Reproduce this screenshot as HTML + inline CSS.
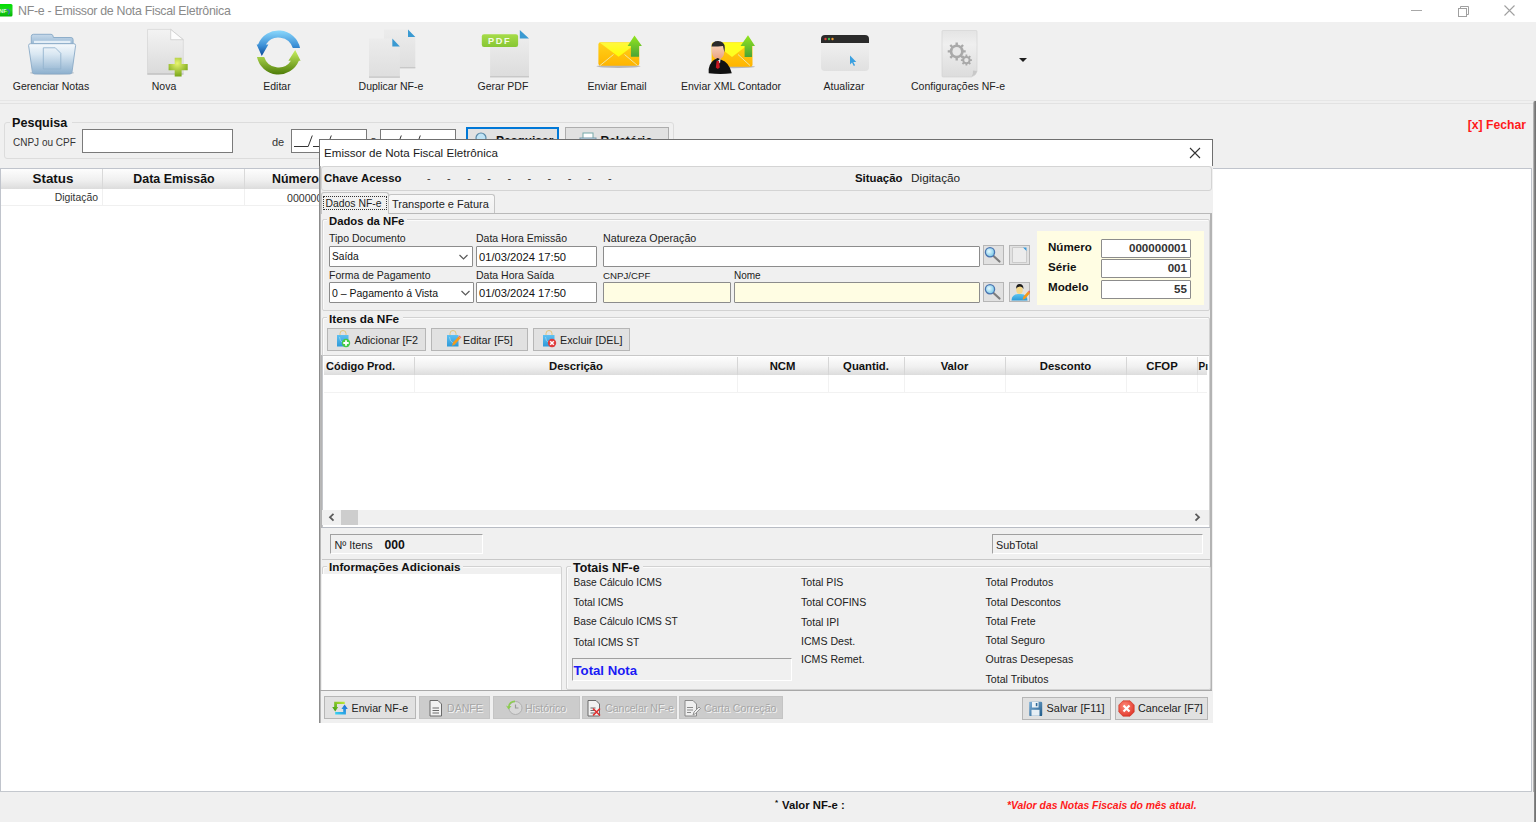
<!DOCTYPE html><html><head><meta charset="utf-8"><style>
html,body{margin:0;padding:0;width:1536px;height:822px;overflow:hidden;background:#f0f0f0}
body{position:relative;font-family:"Liberation Sans",sans-serif}
div{position:absolute;box-sizing:border-box}
.t{white-space:nowrap}
</style></head><body>
<div style="left:0px;top:0px;width:1536px;height:22px;background:#fff"></div>
<svg style="position:absolute;left:0px;top:4px" width="13" height="13" viewBox="0 0 13 13"><defs><linearGradient id="ag" x1="0" y1="0" x2="0" y2="1"><stop offset="0" stop-color="#00e000"/><stop offset="0.5" stop-color="#22d422"/><stop offset="1" stop-color="#00b400"/></linearGradient></defs><rect x="-2" y="0" width="14.5" height="12.5" rx="1.5" fill="url(#ag)"/><text x="-1" y="8.5" font-size="6" font-weight="bold" fill="#d8f8d8" font-family="Liberation Sans">NF</text><path d="M6.5 5.5 q3 0 3 3 l-1.5 2" fill="none" stroke="#3a7ab0" stroke-width="1.3"/></svg>
<div class="t" style="left:18px;top:4.50px;font-size:12.4px;line-height:12.4px;color:#8a8a8a;letter-spacing:-0.3px">NF-e - Emissor de Nota Fiscal Eletrônica</div>
<div style="left:1411px;top:10px;width:11px;height:1px;background:#a8a8a8"></div>
<svg style="position:absolute;left:1456px;top:4px" width="14" height="14" viewBox="0 0 14 14"><rect x="2.5" y="4.5" width="8" height="8" fill="none" stroke="#a0a0a0"/><path d="M4.5 4.5V2.5h8v8h-2" fill="none" stroke="#a0a0a0"/></svg>
<svg style="position:absolute;left:1504px;top:5px" width="12" height="12" viewBox="0 0 12 12"><path d="M0.5 0.5L10.5 10.5M10.5 0.5L0.5 10.5" stroke="#a0a0a0" stroke-width="1.1"/></svg>
<div style="left:0px;top:22px;width:1536px;height:800px;background:#f0f0f0"></div>
<div class="t" style="left:-19.0px;width:140px;text-align:center;top:80.61px;font-size:10.5px;line-height:10.5px;color:#222;">Gerenciar Notas</div>
<div class="t" style="left:94.0px;width:140px;text-align:center;top:80.61px;font-size:10.5px;line-height:10.5px;color:#222;">Nova</div>
<div class="t" style="left:207.0px;width:140px;text-align:center;top:80.61px;font-size:10.5px;line-height:10.5px;color:#222;">Editar</div>
<div class="t" style="left:321.0px;width:140px;text-align:center;top:80.61px;font-size:10.5px;line-height:10.5px;color:#222;">Duplicar NF-e</div>
<div class="t" style="left:433.0px;width:140px;text-align:center;top:80.61px;font-size:10.5px;line-height:10.5px;color:#222;">Gerar PDF</div>
<div class="t" style="left:547.0px;width:140px;text-align:center;top:80.61px;font-size:10.5px;line-height:10.5px;color:#222;">Enviar Email</div>
<div class="t" style="left:661.0px;width:140px;text-align:center;top:80.61px;font-size:10.5px;line-height:10.5px;color:#222;">Enviar XML Contador</div>
<div class="t" style="left:774.0px;width:140px;text-align:center;top:80.61px;font-size:10.5px;line-height:10.5px;color:#222;">Atualizar</div>
<div class="t" style="left:888.0px;width:140px;text-align:center;top:80.61px;font-size:10.5px;line-height:10.5px;color:#222;">Configurações NF-e</div>
<svg style="position:absolute;left:24px;top:28px" width="56" height="50" viewBox="0 0 56 50"><defs>
<linearGradient id="fg1" x1="0" y1="0" x2="0" y2="1"><stop offset="0" stop-color="#f6f9fc"/><stop offset="0.35" stop-color="#d9e7f2"/><stop offset="1" stop-color="#8db0ce"/></linearGradient>
<linearGradient id="fg2" x1="0" y1="0" x2="0" y2="1"><stop offset="0" stop-color="#c6d9ea"/><stop offset="1" stop-color="#9bbad5"/></linearGradient></defs>
<ellipse cx="28" cy="45" rx="22" ry="1.6" fill="#9aa8b4" opacity="0.7"/>
<path d="M7.3 16 V8.5 q0-2.2 2.2-2.2 h17.5 q1.6 0 2 1.6 l0.4 1.6 h17.5 q2.2 0 2.2 2.2 V16z" fill="url(#fg2)" stroke="#86a8c6" stroke-width="0.9"/>
<rect x="10" y="12.8" width="36.5" height="2.2" fill="#e4eef7"/>
<path d="M4.6 17.5 q0-1.8 1.8-1.8 h43.4 q1.8 0 1.8 1.8 l-3.6 26.6 q-0.3 1.8-2 1.8 H10.4 q-1.7 0-2-1.8z" fill="url(#fg1)" stroke="#8aaac7" stroke-width="0.9"/>
<path d="M19.3 19.8 h12 l5.5 5.5 v15.7 h-17.5z" fill="none" stroke="#94b4cf" stroke-width="0.9"/></svg>
<svg style="position:absolute;left:140px;top:24px" width="56" height="56" viewBox="0 0 56 56"><defs><linearGradient id="dg" x1="0" y1="0" x2="0" y2="1"><stop offset="0" stop-color="#f3f3f3"/><stop offset="1" stop-color="#dadada"/></linearGradient>
<radialGradient id="gc" cx="0.45" cy="0.3" r="0.7"><stop offset="0" stop-color="#e8f470"/><stop offset="1" stop-color="#78a618"/></radialGradient></defs>
<path d="M7.5 5.4 h23.2 l12.6 10.3 v34.7 h-35.8z" fill="url(#dg)" stroke="#d4d4d4" stroke-width="0.7"/>
<rect x="7.5" y="49.2" width="35.8" height="1.4" fill="#c4c4c4"/>
<path d="M30.7 5.4 v10.3 h12.6z" fill="#fdfdfd" stroke="#c8c8c8" stroke-width="0.7"/>
<path d="M34.7 33.7 h6.9 v6.2 h6.1 v6.4 h-6.1 v6.2 h-6.9 v-6.2 h-6.1 v-6.4 h6.1z" fill="url(#gc)"/></svg>
<svg style="position:absolute;left:254px;top:27px" width="50" height="52" viewBox="0 0 50 52"><defs><linearGradient id="rb" x1="0" y1="0" x2="0" y2="1"><stop offset="0" stop-color="#8ad8fc"/><stop offset="0.6" stop-color="#3c8fd6"/><stop offset="1" stop-color="#0a4a98"/></linearGradient>
<linearGradient id="rg" x1="0" y1="0" x2="0" y2="1"><stop offset="0" stop-color="#c8f060"/><stop offset="1" stop-color="#4e7c08"/></linearGradient></defs>
<path d="M46.03 21 A22 22 0 0 0 4.05 17.4 L2.6 17.4 L7.8 28.9 L14.4 17.4 L11.87 17.4 A15 15 0 0 1 38.81 21z" fill="url(#rb)"/><path d="M2.97 30 A22 22 0 0 0 44.87 33.8 L46.6 33.8 L41.2 23 L34.4 33.8 L36.99 33.8 A15 15 0 0 1 10.19 30z" fill="url(#rg)"/></svg>
<svg style="position:absolute;left:364px;top:26px" width="56" height="56" viewBox="0 0 56 56"><defs><linearGradient id="dg2" x1="0" y1="0" x2="0" y2="1"><stop offset="0" stop-color="#ececec"/><stop offset="1" stop-color="#dedede"/></linearGradient></defs>
<path d="M20 3.6 H44 L51.3 10.9 V42.1 H20z" fill="url(#dg2)"/>
<rect x="20" y="41" width="31.3" height="1.4" fill="#c8c8c8"/>
<path d="M44 3.6 V10.9 H51.3z" fill="#3a9ad2"/>
<path d="M5 12.5 H28.3 L35.9 20.4 V51.6 H5z" fill="url(#dg2)"/>
<rect x="5" y="50.4" width="30.9" height="1.4" fill="#c8c8c8"/>
<path d="M28.3 12.5 V20.4 H35.9z" fill="#3a9ad2"/></svg>
<svg style="position:absolute;left:476px;top:26px" width="56" height="56" viewBox="0 0 56 56"><defs><linearGradient id="dg3" x1="0" y1="0" x2="0" y2="1"><stop offset="0" stop-color="#f0f0f0"/><stop offset="1" stop-color="#dcdcdc"/></linearGradient>
<linearGradient id="pdfg" x1="0" y1="0" x2="0" y2="1"><stop offset="0" stop-color="#a6dc48"/><stop offset="1" stop-color="#86c634"/></linearGradient></defs>
<path d="M14.1 4 H43.8 L53 12.5 V51.3 H14.1z" fill="url(#dg3)"/>
<rect x="14.1" y="50" width="38.9" height="1.4" fill="#c8c8c8"/>
<path d="M43.8 4 V12.5 H53z" fill="#3a9ad2"/>
<rect x="5.8" y="8.2" width="36.3" height="12.8" rx="2.2" fill="url(#pdfg)"/>
<text x="12" y="18.3" font-size="9.2" font-weight="bold" fill="#f4fbe8" font-family="Liberation Sans" letter-spacing="1.6">PDF</text></svg>
<svg style="position:absolute;left:590px;top:30px" width="56" height="40" viewBox="0 0 56 40"><defs><linearGradient id="env" x1="0" y1="0" x2="0" y2="1"><stop offset="0" stop-color="#ffd21a"/><stop offset="1" stop-color="#ffb400"/></linearGradient>
<linearGradient id="flp" x1="0" y1="0" x2="0" y2="1"><stop offset="0" stop-color="#fff840"/><stop offset="1" stop-color="#ffff00"/></linearGradient>
<linearGradient id="ar" x1="0" y1="0" x2="0" y2="1"><stop offset="0" stop-color="#94e61e"/><stop offset="1" stop-color="#4aa436"/></linearGradient></defs>
<ellipse cx="28.5" cy="36.3" rx="22" ry="1.6" fill="#b8b8b8"/>
<rect x="8.4" y="12.3" width="40.9" height="23.5" rx="2.2" fill="url(#env)"/>
<path d="M10 35.5 L23.5 24.5 M47.5 35.5 L34.5 24.5" stroke="#f2e6a0" stroke-width="1"/>
<path d="M9.5 12.5 L28.6 26.8 L47.5 12.5z" fill="url(#flp)"/>
<path d="M44.5 5.6 L51.9 16.1 H49 V26.8 H40.9 V16.1 H37.6z" fill="url(#ar)"/></svg>
<svg style="position:absolute;left:702px;top:30px" width="58" height="48" viewBox="0 0 58 48"><defs><linearGradient id="env2" x1="0" y1="0" x2="0" y2="1"><stop offset="0" stop-color="#ffd21a"/><stop offset="1" stop-color="#ffb400"/></linearGradient>
<linearGradient id="ar2" x1="0" y1="0" x2="0" y2="1"><stop offset="0" stop-color="#94e61e"/><stop offset="1" stop-color="#4aa436"/></linearGradient>
<linearGradient id="sk" x1="0" y1="0" x2="0" y2="1"><stop offset="0" stop-color="#fde0c8"/><stop offset="1" stop-color="#e8a080"/></linearGradient></defs>
<ellipse cx="32" cy="36.8" rx="21" ry="1.5" fill="#b8b8b8"/>
<rect x="9.6" y="12.3" width="40.9" height="24.5" rx="2" fill="url(#env2)"/>
<path d="M36 24.5 L48 35.5" stroke="#f2e6a0" stroke-width="1"/>
<path d="M11 12.5 L30 27 L49 12.5z" fill="#ffff20"/>
<path d="M46 5.3 L53 16 H50 V27 H42.6 V16 H38.5z" fill="url(#ar2)"/>
<path d="M9.9 17 q0-5.5 6-5.7 q6 0 6.5 6 v4 q-0.5 7.5-6.2 8.3 q-6 -0.5-6.3-8.3z" fill="url(#sk)"/>
<path d="M9.5 16.5 q0.5-5.5 6.5-5.5 q6.5 0 6.8 6.5 l-0.3 5 q-1-4-1.5-6.5 q-4.5 0.5-11.5 0.5z" fill="#2a2a2a"/>
<path d="M6.7 43.2 q-1-9 5.5-13.5 l3.5-1.8 l3.5 1.8 q8 2.5 10.6 13.5 q-11 1.5-23.1 0z" fill="#121212"/>
<path d="M12.8 28.6 l2.9 2.4 2.9-2.4 -0.6 5z" fill="#f0f0f0"/>
<path d="M14.6 31 h2.4 l0.8 6.5 -2 1.5 -2-1.5z" fill="#c81820"/></svg>
<svg style="position:absolute;left:820px;top:34px" width="50" height="40" viewBox="0 0 50 40"><defs><linearGradient id="wg" x1="0" y1="0" x2="0" y2="1"><stop offset="0" stop-color="#f4f4f4"/><stop offset="1" stop-color="#e0e0e0"/></linearGradient></defs>
<rect x="1" y="1" width="48" height="36" rx="4" fill="url(#wg)"/>
<path d="M1 9 v-4 q0-4 4-4 h40 q4 0 4 4 v4z" fill="#2b2b2b"/>
<circle cx="5.5" cy="5" r="1.2" fill="#e0443a"/><circle cx="9" cy="5" r="1.2" fill="#3db84a"/><circle cx="12.5" cy="5" r="1.2" fill="#f0a030"/>
<path d="M30 21.5 l0 9 2-2 1.8 3.5 1.3-0.7 -1.8-3.4 3 0z" fill="#3aa0e0"/></svg>
<svg style="position:absolute;left:940px;top:29px" width="40" height="50" viewBox="0 0 40 50"><defs><linearGradient id="cg" x1="0" y1="0" x2="0" y2="1"><stop offset="0" stop-color="#e4e4e4"/><stop offset="0.3" stop-color="#efefef"/><stop offset="1" stop-color="#dcdcdc"/></linearGradient></defs>
<path d="M2 2.5 q0-1 1-1 h33 q1 0 1 1 v40 q-1 4-5.5 5.5 h-28.5 q-1 0-1-1z" fill="url(#cg)" stroke="#d0d0d0" stroke-width="0.6"/>
<path d="M37 42 q-1 4-5.5 5.5 q2-3 1.5-6z" fill="#c8c8c8"/>
<g fill="#a9a9a9"><circle cx="16.7" cy="22.4" r="7"/><circle cx="26.4" cy="31.1" r="4.2"/></g>
<g stroke="#a9a9a9" stroke-width="2.4"><path d="M16.7 13.4v18M7.7 22.4h18M10.3 16l12.8 12.8M23.1 16l-12.8 12.8"/></g>
<g stroke="#a9a9a9" stroke-width="1.8"><path d="M26.4 25.6v11M20.9 31.1h11M22.5 27.2l7.8 7.8M30.3 27.2l-7.8 7.8"/></g>
<circle cx="16.7" cy="22.4" r="4.3" fill="#e8e8e8"/><circle cx="26.4" cy="31.1" r="2.2" fill="#e8e8e8"/></svg>
<svg style="position:absolute;left:1018px;top:57px" width="10" height="6" viewBox="0 0 10 6"><path d="M1 1h8l-4 4z" fill="#1e1e1e"/></svg>
<div style="left:0px;top:100px;width:1536px;height:1px;background:#e6e6e6"></div>
<div style="left:0px;top:103px;width:1536px;height:1px;background:#e2e2e2"></div>
<div style="left:1533px;top:101px;width:3px;height:721px;background:linear-gradient(90deg,#c8c8c8,#7a7a7a 60%,#707070);border-top-left-radius:2px"></div>
<div style="left:4px;top:122px;width:670px;height:37px;border:1px solid #dcdcdc;border-radius:3px;box-sizing:border-box"></div>
<div style="left:10px;top:116px;width:62px;height:12px;background:#f0f0f0"></div>
<div class="t" style="left:12px;top:117.33px;font-size:12.6px;line-height:12.6px;font-weight:bold;color:#111;">Pesquisa</div>
<div class="t" style="left:13px;top:137.53px;font-size:10px;line-height:10px;color:#333;">CNPJ ou CPF</div>
<div style="left:82px;top:129px;width:151px;height:24px;background:#fff;border:1px solid #7a7a7a;box-sizing:border-box"></div>
<div class="t" style="left:272px;top:137.19px;font-size:11px;line-height:11px;color:#333;">de</div>
<div style="left:291px;top:129px;width:76px;height:24px;background:#fff;border:1px solid #7a7a7a;box-sizing:border-box"></div>
<svg style="position:absolute;left:291px;top:129px" width="76" height="24" viewBox="0 0 76 24"><path d="M3 17.5h14.2l4.1-11M22 17.5h14.2l4.1-11M41 17.5h26" fill="none" stroke="#333" stroke-width="1"/></svg>
<div class="t" style="left:370.5px;top:135.19px;font-size:11px;line-height:11px;color:#333;">a</div>
<div style="left:380px;top:129px;width:76px;height:24px;background:#fff;border:1px solid #7a7a7a;box-sizing:border-box"></div>
<svg style="position:absolute;left:380px;top:129px" width="76" height="24" viewBox="0 0 76 24"><path d="M3 17.5h14.2l4.1-11M22 17.5h14.2l4.1-11M41 17.5h26" fill="none" stroke="#333" stroke-width="1"/></svg>
<div style="left:466px;top:127px;width:93px;height:28px;background:#e1e1e1;border:2px solid #0078d7;box-sizing:border-box"></div>
<div style="left:565px;top:127px;width:104px;height:28px;background:#e1e1e1;border:1px solid #adadad;box-sizing:border-box"></div>
<div class="t" style="left:496px;top:134.84px;font-size:12px;line-height:12px;font-weight:bold;color:#111;">Pesquisar</div>
<div class="t" style="left:600.5px;top:134.84px;font-size:12px;line-height:12px;font-weight:bold;color:#111;">Relatório</div>
<svg style="position:absolute;left:474px;top:131px" width="16" height="12" viewBox="0 0 16 12"><circle cx="7" cy="7" r="5" fill="#bfe3f5" stroke="#5a8aa8" stroke-width="1.2"/></svg>
<svg style="position:absolute;left:579px;top:132px" width="18" height="10" viewBox="0 0 18 10"><rect x="4" y="1" width="10" height="6" fill="#fff" stroke="#7aa"/><rect x="1" y="6" width="16" height="6" fill="#cde" stroke="#79a"/></svg>
<div class="t" style="left:1426px;width:100px;text-align:right;top:119.17px;font-size:12.2px;line-height:12.2px;font-weight:bold;color:#ff1a1a;">[x] Fechar</div>
<div style="left:0px;top:168px;width:1532px;height:624px;background:#fff;border:1px solid #c0c4cc;border-bottom:none;box-sizing:border-box"></div>
<div style="left:1px;top:169px;width:318px;height:20px;background:linear-gradient(#fdfdfd,#f0f0f0 55%,#dcdcdc)"></div>
<div style="left:102px;top:169px;width:1px;height:20px;background:#d9d9d9"></div>
<div style="left:244px;top:169px;width:1px;height:20px;background:#d9d9d9"></div>
<div style="left:102px;top:189px;width:1px;height:17px;background:#f0f0f0"></div>
<div style="left:244px;top:189px;width:1px;height:17px;background:#f0f0f0"></div>
<div style="left:1px;top:205px;width:318px;height:1px;background:#f0f0f0"></div>
<div class="t" style="left:3.0px;width:100px;text-align:center;top:172.36px;font-size:13.4px;line-height:13.4px;font-weight:bold;color:#111;">Status</div>
<div class="t" style="left:104.0px;width:140px;text-align:center;top:173.20px;font-size:12.4px;line-height:12.4px;font-weight:bold;color:#111;">Data Emissão</div>
<div class="t" style="left:272px;top:173.20px;font-size:12.4px;line-height:12.4px;font-weight:bold;color:#111;">Número</div>
<div class="t" style="left:18px;width:80px;text-align:right;top:192.70px;font-size:10.4px;line-height:10.4px;color:#333;">Digitação</div>
<div class="t" style="left:287px;top:192.53px;font-size:10.6px;line-height:10.6px;color:#333;">000000</div>
<div style="left:0px;top:791px;width:1532px;height:1px;background:#c4c8ce"></div>
<div style="left:0px;top:792px;width:1534px;height:30px;background:#f0f0f0"></div>
<div class="t" style="left:775px;top:799.23px;font-size:8px;line-height:8px;font-weight:bold;color:#111;">*</div>
<div class="t" style="left:782px;top:799.93px;font-size:11.3px;line-height:11.3px;font-weight:bold;color:#111;">Valor NF-e :</div>
<div class="t" style="left:1007px;top:801.20px;font-size:10.4px;line-height:10.4px;font-weight:bold;font-style:italic;color:#ff1a1a;">*Valor das Notas Fiscais do mês atual.</div>
<div style="left:319px;top:139px;width:894px;height:28px;background:#fff;border:1px solid #6f6f6f;border-bottom:none"></div>
<div class="t" style="left:324px;top:147.18px;font-size:11.6px;line-height:11.6px;color:#1a1a1a;">Emissor de Nota Fiscal Eletrônica</div>
<svg style="position:absolute;left:1189px;top:147px" width="12" height="12" viewBox="0 0 12 12"><path d="M1 1L11 11M11 1L1 11" stroke="#333" stroke-width="1.1"/></svg>
<div style="left:319px;top:166px;width:894px;height:557px;background:#f0f0f0"></div>
<div style="left:319px;top:166px;width:1px;height:557px;background:#8c8c8c"></div>
<div style="left:320px;top:166px;width:1px;height:557px;background:#b8b8b8"></div>
<div style="left:321px;top:166px;width:891px;height:25px;border:1px solid #d4d4d4;border-radius:3px;background:#efefef"></div>
<div class="t" style="left:324px;top:173.15px;font-size:11.4px;line-height:11.4px;font-weight:bold;color:#111;">Chave Acesso</div>
<div class="t" style="left:427.0px;top:172.69px;font-size:11px;line-height:11px;color:#333;">-</div>
<div class="t" style="left:447.1px;top:172.69px;font-size:11px;line-height:11px;color:#333;">-</div>
<div class="t" style="left:467.2px;top:172.69px;font-size:11px;line-height:11px;color:#333;">-</div>
<div class="t" style="left:487.3px;top:172.69px;font-size:11px;line-height:11px;color:#333;">-</div>
<div class="t" style="left:507.4px;top:172.69px;font-size:11px;line-height:11px;color:#333;">-</div>
<div class="t" style="left:527.5px;top:172.69px;font-size:11px;line-height:11px;color:#333;">-</div>
<div class="t" style="left:547.6px;top:172.69px;font-size:11px;line-height:11px;color:#333;">-</div>
<div class="t" style="left:567.7px;top:172.69px;font-size:11px;line-height:11px;color:#333;">-</div>
<div class="t" style="left:587.8px;top:172.69px;font-size:11px;line-height:11px;color:#333;">-</div>
<div class="t" style="left:607.9px;top:172.69px;font-size:11px;line-height:11px;color:#333;">-</div>
<div class="t" style="left:855px;top:173.15px;font-size:11.4px;line-height:11.4px;font-weight:bold;color:#111;">Situação</div>
<div class="t" style="left:911px;top:172.81px;font-size:11.8px;line-height:11.8px;color:#222;">Digitação</div>
<div style="left:321px;top:213px;width:891px;height:478px;border:1px solid #b9b9b9;border-left:none;border-right:2px solid #b3b3b3"></div>
<div style="left:388px;top:194px;width:107px;height:19px;background:linear-gradient(#f8f8f8,#f0f0f0);border:1px solid #c4c4c4;border-bottom:none;border-radius:3px 3px 0 0"></div>
<div style="left:321px;top:192px;width:68px;height:22px;background:#f0f0f0;border:1px solid #c4c4c4;border-bottom:none;border-radius:3px 3px 0 0"></div>
<div style="left:322px;top:213px;width:66px;height:1px;background:#f0f0f0"></div>
<div style="left:323px;top:196px;width:64px;height:14px;border:1px dotted #333"></div>
<div class="t" style="left:325.5px;top:198.70px;font-size:10.4px;line-height:10.4px;color:#222;">Dados NF-e</div>
<div class="t" style="left:392px;top:199.19px;font-size:11px;line-height:11px;color:#222;">Transporte e Fatura</div>
<div style="left:322px;top:219px;width:888px;height:92px;border:1px solid #d2d2d2;border-radius:2px;box-shadow:inset 1px 1px 0 #fbfbfb"></div>
<div style="left:327px;top:214px;width:80px;height:8px;background:#f0f0f0"></div>
<div class="t" style="left:329px;top:215.83px;font-size:11.3px;line-height:11.3px;font-weight:bold;color:#111;">Dados da NFe</div>
<div class="t" style="left:329px;top:233.11px;font-size:10.5px;line-height:10.5px;color:#222;">Tipo Documento</div>
<div class="t" style="left:476px;top:233.11px;font-size:10.5px;line-height:10.5px;color:#222;">Data Hora Emissão</div>
<div class="t" style="left:603px;top:232.94px;font-size:10.7px;line-height:10.7px;color:#222;">Natureza Operação</div>
<div style="left:329px;top:246px;width:144px;height:21px;background:#fff;border:1px solid #8c8c8c;border-radius:1px"></div>
<div class="t" style="left:332px;top:251.87px;font-size:10.2px;line-height:10.2px;color:#111;">Saída</div>
<svg style="position:absolute;left:458px;top:252px" width="12" height="10" viewBox="0 0 12 10"><path d="M1.5 3l4 4 4-4" fill="none" stroke="#5a5a5a" stroke-width="1.2"/></svg>
<div style="left:476px;top:246px;width:121px;height:21px;background:#fff;border:1px solid #8c8c8c;border-radius:1px"></div>
<div class="t" style="left:479px;top:251.52px;font-size:11.2px;line-height:11.2px;color:#111;">01/03/2024 17:50</div>
<div style="left:603px;top:246px;width:377px;height:21px;background:#fff;border:1px solid #8c8c8c;border-radius:1px"></div>
<div style="left:983px;top:245px;width:21px;height:20px;background:#e1e1e1;border:1px solid #b6b6b6"></div>
<div style="left:1009px;top:245px;width:21px;height:20px;background:#e1e1e1;border:1px solid #b6b6b6"></div>
<div class="t" style="left:329px;top:270.41px;font-size:10.5px;line-height:10.5px;color:#222;">Forma de Pagamento</div>
<div class="t" style="left:476px;top:270.41px;font-size:10.5px;line-height:10.5px;color:#222;">Data Hora Saída</div>
<div class="t" style="left:603px;top:271.09px;font-size:9.7px;line-height:9.7px;color:#222;">CNPJ/CPF</div>
<div class="t" style="left:734px;top:270.84px;font-size:10px;line-height:10px;color:#222;">Nome</div>
<div style="left:329px;top:282px;width:145px;height:21px;background:#fff;border:1px solid #8c8c8c;border-radius:1px"></div>
<div class="t" style="left:332px;top:288.11px;font-size:10.5px;line-height:10.5px;color:#111;">0 – Pagamento á Vista</div>
<svg style="position:absolute;left:460px;top:288px" width="12" height="10" viewBox="0 0 12 10"><path d="M1.5 3l4 4 4-4" fill="none" stroke="#5a5a5a" stroke-width="1.2"/></svg>
<div style="left:476px;top:282px;width:121px;height:21px;background:#fff;border:1px solid #8c8c8c;border-radius:1px"></div>
<div class="t" style="left:479px;top:287.52px;font-size:11.2px;line-height:11.2px;color:#111;">01/03/2024 17:50</div>
<div style="left:603px;top:282px;width:128px;height:21px;background:#fffde3;border:1px solid #8c8c8c;border-radius:1px"></div>
<div style="left:734px;top:282px;width:246px;height:21px;background:#fffde3;border:1px solid #8c8c8c;border-radius:1px"></div>
<div style="left:983px;top:282px;width:21px;height:20px;background:#e1e1e1;border:1px solid #b6b6b6"></div>
<div style="left:1009px;top:282px;width:21px;height:20px;background:#e1e1e1;border:1px solid #b6b6b6"></div>
<svg style="position:absolute;left:983px;top:245px" width="20" height="19" viewBox="0 0 20 19"><defs><radialGradient id="mgr" cx="0.4" cy="0.4" r="0.6"><stop offset="0" stop-color="#e6f8ff"/><stop offset="1" stop-color="#7ccbe8"/></radialGradient></defs><path d="M10.5 11 L16.5 16.5" stroke="#7d7d7d" stroke-width="2.2" stroke-linecap="round"/><circle cx="7" cy="7.3" r="4.6" fill="url(#mgr)" stroke="#4a74b0" stroke-width="1.3"/></svg>
<svg style="position:absolute;left:983px;top:282px" width="20" height="19" viewBox="0 0 20 19"><defs><radialGradient id="mgr" cx="0.4" cy="0.4" r="0.6"><stop offset="0" stop-color="#e6f8ff"/><stop offset="1" stop-color="#7ccbe8"/></radialGradient></defs><path d="M10.5 11 L16.5 16.5" stroke="#7d7d7d" stroke-width="2.2" stroke-linecap="round"/><circle cx="7" cy="7.3" r="4.6" fill="url(#mgr)" stroke="#4a74b0" stroke-width="1.3"/></svg>
<svg style="position:absolute;left:1009px;top:245px" width="21" height="20" viewBox="0 0 21 20"><path d="M3.5 2.5 h11 l3 3 v12 h-14z" fill="#ececec" stroke="#c4c4c4" stroke-width="0.8"/><path d="M14 2.5 l3.5 3.5 v-3.5z" fill="#3a9ad9"/></svg>
<svg style="position:absolute;left:1009px;top:282px" width="21" height="20" viewBox="0 0 21 20"><defs><linearGradient id="pb" x1="0" y1="0" x2="0" y2="1"><stop offset="0" stop-color="#5ec4f0"/><stop offset="1" stop-color="#2a9ad8"/></linearGradient></defs><path d="M2.5 18.5 q0-6 6.5-6.5 h3 q6.5 0.5 6.5 6.5z" fill="url(#pb)"/><ellipse cx="10.5" cy="8" rx="3.3" ry="4" fill="#f5d98a"/><path d="M7 7 q0-5 3.5-5 q4 0 4 5 q-1-2.5-3.5-2.5 q-3 0-4 2.5z" fill="#1c1c1c"/><path d="M13.5 18 l1-3.5 4.5-5 2 1.8 -4.5 5z" fill="#f59a1a"/><path d="M19 9.5 l1-1 2 1.8 -1 1z" fill="#e86060"/></svg>
<div style="left:1037px;top:231px;width:167px;height:74px;background:#fffde3"></div>
<div class="t" style="left:1048px;top:241.38px;font-size:11.6px;line-height:11.6px;font-weight:bold;color:#111;">Número</div>
<div class="t" style="left:1048px;top:261.28px;font-size:11.6px;line-height:11.6px;font-weight:bold;color:#111;">Série</div>
<div class="t" style="left:1048px;top:281.18px;font-size:11.6px;line-height:11.6px;font-weight:bold;color:#111;">Modelo</div>
<div style="left:1101px;top:239px;width:90px;height:19px;background:#fff;border:1px solid #8c8c8c;border-radius:1px"></div>
<div style="left:1101px;top:259px;width:90px;height:19px;background:#fff;border:1px solid #8c8c8c;border-radius:1px"></div>
<div style="left:1101px;top:280px;width:90px;height:19px;background:#fff;border:1px solid #8c8c8c;border-radius:1px"></div>
<div class="t" style="left:1102px;width:85px;text-align:right;top:242.18px;font-size:11.6px;line-height:11.6px;font-weight:bold;color:#333;">000000001</div>
<div class="t" style="left:1102px;width:85px;text-align:right;top:262.18px;font-size:11.6px;line-height:11.6px;font-weight:bold;color:#333;">001</div>
<div class="t" style="left:1102px;width:85px;text-align:right;top:282.68px;font-size:11.6px;line-height:11.6px;font-weight:bold;color:#333;">55</div>
<div style="left:322px;top:317px;width:888px;height:211px;border:1px solid #d2d2d2;border-radius:2px;box-shadow:inset 1px 1px 0 #fbfbfb"></div>
<div style="left:327px;top:313px;width:76px;height:8px;background:#f0f0f0"></div>
<div class="t" style="left:329px;top:313.61px;font-size:11.8px;line-height:11.8px;font-weight:bold;color:#111;">Itens da NFe</div>
<div style="left:327px;top:328px;width:99px;height:23px;background:#e1e1e1;border:1px solid #b6b6b6"></div>
<div style="left:431px;top:328px;width:97px;height:23px;background:#e1e1e1;border:1px solid #b6b6b6"></div>
<div style="left:533px;top:328px;width:97px;height:23px;background:#e1e1e1;border:1px solid #b6b6b6"></div>
<div class="t" style="left:354.5px;top:334.86px;font-size:10.8px;line-height:10.8px;color:#222;">Adicionar [F2</div>
<div class="t" style="left:463px;top:334.86px;font-size:10.8px;line-height:10.8px;color:#222;">Editar [F5]</div>
<div class="t" style="left:560px;top:334.86px;font-size:10.8px;line-height:10.8px;color:#222;">Excluir [DEL]</div>
<svg style="position:absolute;left:336px;top:330px" width="16" height="18" viewBox="0 0 16 18"><defs><linearGradient id="bgb" x1="0" y1="0" x2="0" y2="1"><stop offset="0" stop-color="#5ec0f2"/><stop offset="1" stop-color="#2e9ad8"/></linearGradient></defs><path d="M4 5 v-1.5 q0-3 3-3 q3 0 3 3 v1.5" fill="none" stroke="#e2c67a" stroke-width="1"/><rect x="1" y="5" width="11.5" height="11.5" fill="url(#bgb)"/><path d="M3.5 7 q0 4 3.5 6" fill="none" stroke="#b9e0f2" stroke-width="0.6"/><circle cx="10" cy="13" r="4.2" fill="#44cc44"/><path d="M10 10.3v5.4M7.3 13h5.4" stroke="#fff" stroke-width="1.8"/></svg>
<svg style="position:absolute;left:446px;top:330px" width="16" height="18" viewBox="0 0 16 18"><defs><linearGradient id="bgb" x1="0" y1="0" x2="0" y2="1"><stop offset="0" stop-color="#5ec0f2"/><stop offset="1" stop-color="#2e9ad8"/></linearGradient></defs><path d="M4 5 v-1.5 q0-3 3-3 q3 0 3 3 v1.5" fill="none" stroke="#e2c67a" stroke-width="1"/><rect x="1" y="5" width="11.5" height="11.5" fill="url(#bgb)"/><path d="M3.5 7 q0 4 3.5 6" fill="none" stroke="#b9e0f2" stroke-width="0.6"/><path d="M6 16 l1-3.5 5.5-6 2 1.8 -5.5 6z" fill="#f59a1a"/><path d="M12.5 6.5l1-1 2 1.8-1 1z" fill="#e87070"/></svg>
<svg style="position:absolute;left:542px;top:330px" width="16" height="18" viewBox="0 0 16 18"><defs><linearGradient id="bgb" x1="0" y1="0" x2="0" y2="1"><stop offset="0" stop-color="#5ec0f2"/><stop offset="1" stop-color="#2e9ad8"/></linearGradient></defs><path d="M4 5 v-1.5 q0-3 3-3 q3 0 3 3 v1.5" fill="none" stroke="#e2c67a" stroke-width="1"/><rect x="1" y="5" width="11.5" height="11.5" fill="url(#bgb)"/><path d="M3.5 7 q0 4 3.5 6" fill="none" stroke="#b9e0f2" stroke-width="0.6"/><circle cx="10" cy="13" r="4.2" fill="#e03a3a"/><path d="M8.2 11.2l3.6 3.6M11.8 11.2l-3.6 3.6" stroke="#fff" stroke-width="1.5"/></svg>
<div style="left:322px;top:355px;width:887px;height:173px;background:#fff;border-top:1px solid #c8c8c8;border-left:1px solid #c4c6ca"></div>
<div style="left:321px;top:355px;width:1px;height:173px;background:#b4b4b4"></div>
<div style="left:324px;top:357px;width:883px;height:18px;background:linear-gradient(#fdfdfd,#f0f0f0 55%,#dcdcdc)"></div>
<div style="left:414px;top:357px;width:1px;height:18px;background:#d6d6d6"></div>
<div style="left:414px;top:375px;width:1px;height:17px;background:#f2f2f2"></div>
<div style="left:737px;top:357px;width:1px;height:18px;background:#d6d6d6"></div>
<div style="left:737px;top:375px;width:1px;height:17px;background:#f2f2f2"></div>
<div style="left:828px;top:357px;width:1px;height:18px;background:#d6d6d6"></div>
<div style="left:828px;top:375px;width:1px;height:17px;background:#f2f2f2"></div>
<div style="left:904px;top:357px;width:1px;height:18px;background:#d6d6d6"></div>
<div style="left:904px;top:375px;width:1px;height:17px;background:#f2f2f2"></div>
<div style="left:1005px;top:357px;width:1px;height:18px;background:#d6d6d6"></div>
<div style="left:1005px;top:375px;width:1px;height:17px;background:#f2f2f2"></div>
<div style="left:1126px;top:357px;width:1px;height:18px;background:#d6d6d6"></div>
<div style="left:1126px;top:375px;width:1px;height:17px;background:#f2f2f2"></div>
<div style="left:1197px;top:357px;width:1px;height:18px;background:#d6d6d6"></div>
<div style="left:1197px;top:375px;width:1px;height:17px;background:#f2f2f2"></div>
<div style="left:324px;top:392px;width:883px;height:1px;background:#f2f2f2"></div>
<div class="t" style="left:326px;top:361.19px;font-size:11px;line-height:11px;font-weight:bold;color:#111;">Código Prod.</div>
<div class="t" style="left:516.0px;width:120px;text-align:center;top:360.93px;font-size:11.3px;line-height:11.3px;font-weight:bold;color:#111;">Descrição</div>
<div class="t" style="left:722.5px;width:120px;text-align:center;top:360.93px;font-size:11.3px;line-height:11.3px;font-weight:bold;color:#111;">NCM</div>
<div class="t" style="left:806.0px;width:120px;text-align:center;top:360.93px;font-size:11.3px;line-height:11.3px;font-weight:bold;color:#111;">Quantid.</div>
<div class="t" style="left:894.5px;width:120px;text-align:center;top:360.93px;font-size:11.3px;line-height:11.3px;font-weight:bold;color:#111;">Valor</div>
<div class="t" style="left:1005.5px;width:120px;text-align:center;top:360.93px;font-size:11.3px;line-height:11.3px;font-weight:bold;color:#111;">Desconto</div>
<div class="t" style="left:1102.0px;width:120px;text-align:center;top:360.93px;font-size:11.3px;line-height:11.3px;font-weight:bold;color:#111;">CFOP</div>
<div class="t" style="left:1198.5px;top:362.04px;font-size:10px;line-height:10px;font-weight:bold;color:#111;">Pı</div>
<div style="left:322px;top:510px;width:887px;height:15px;background:#f0f0f0"></div>
<svg style="position:absolute;left:327px;top:512px" width="10" height="10" viewBox="0 0 10 10"><path d="M6.5 1.8L3 5.2l3.5 3.5" fill="none" stroke="#5a5a5a" stroke-width="1.8"/></svg>
<svg style="position:absolute;left:1192px;top:512px" width="10" height="10" viewBox="0 0 10 10"><path d="M3.5 1.8L7 5.2 3.5 8.7" fill="none" stroke="#5a5a5a" stroke-width="1.8"/></svg>
<div style="left:341px;top:510px;width:17px;height:15px;background:#cdcdcd"></div>
<div style="left:322px;top:527px;width:888px;height:1px;background:#b8bcc4"></div>
<div style="left:330px;top:534px;width:153px;height:20px;border-top:1px solid #a0a0a0;border-left:1px solid #a0a0a0;border-bottom:1px solid #fff;border-right:1px solid #fff"></div>
<div class="t" style="left:334.5px;top:539.86px;font-size:10.8px;line-height:10.8px;color:#222;">Nº Itens</div>
<div class="t" style="left:384.5px;top:539.47px;font-size:12.2px;line-height:12.2px;font-weight:bold;color:#111;">000</div>
<div style="left:992px;top:534px;width:211px;height:20px;border-top:1px solid #a0a0a0;border-left:1px solid #a0a0a0;border-bottom:1px solid #fff;border-right:1px solid #fff"></div>
<div class="t" style="left:996px;top:539.86px;font-size:10.8px;line-height:10.8px;color:#222;">SubTotal</div>
<div style="left:322px;top:559px;width:888px;height:1px;background:#c8c8c8"></div>
<div style="left:322px;top:566px;width:240px;height:125px;border:1px solid #d2d2d2;border-radius:2px;box-shadow:inset 1px 1px 0 #fbfbfb"></div>
<div style="left:322px;top:574px;width:239px;height:116px;background:#fff"></div>
<div style="left:327px;top:561px;width:136px;height:10px;background:#f0f0f0"></div>
<div class="t" style="left:329px;top:561.30px;font-size:11.7px;line-height:11.7px;font-weight:bold;color:#111;">Informações Adicionais</div>
<div style="left:566px;top:566px;width:645px;height:124px;border:1px solid #d2d2d2;border-radius:2px;box-shadow:inset 1px 1px 0 #fbfbfb"></div>
<div style="left:571px;top:560px;width:72px;height:10px;background:#f0f0f0"></div>
<div class="t" style="left:573px;top:562.10px;font-size:12.4px;line-height:12.4px;font-weight:bold;color:#111;">Totais NF-e</div>
<div class="t" style="left:573.5px;top:578.07px;font-size:10.2px;line-height:10.2px;color:#222;">Base Cálculo ICMS</div>
<div class="t" style="left:573.5px;top:598.27px;font-size:10.2px;line-height:10.2px;color:#222;">Total ICMS</div>
<div class="t" style="left:573.5px;top:617.37px;font-size:10.2px;line-height:10.2px;color:#222;">Base Cálculo ICMS ST</div>
<div class="t" style="left:573.5px;top:637.97px;font-size:10.2px;line-height:10.2px;color:#222;">Total ICMS ST</div>
<div class="t" style="left:801px;top:576.93px;font-size:10.6px;line-height:10.6px;color:#222;">Total PIS</div>
<div class="t" style="left:801px;top:596.83px;font-size:10.6px;line-height:10.6px;color:#222;">Total COFINS</div>
<div class="t" style="left:801px;top:617.23px;font-size:10.6px;line-height:10.6px;color:#222;">Total IPI</div>
<div class="t" style="left:801px;top:635.83px;font-size:10.6px;line-height:10.6px;color:#222;">ICMS Dest.</div>
<div class="t" style="left:801px;top:653.83px;font-size:10.6px;line-height:10.6px;color:#222;">ICMS Remet.</div>
<div class="t" style="left:985.5px;top:576.53px;font-size:10.6px;line-height:10.6px;color:#222;">Total Produtos</div>
<div class="t" style="left:985.5px;top:596.53px;font-size:10.6px;line-height:10.6px;color:#222;">Total Descontos</div>
<div class="t" style="left:985.5px;top:615.63px;font-size:10.6px;line-height:10.6px;color:#222;">Total Frete</div>
<div class="t" style="left:985.5px;top:634.83px;font-size:10.6px;line-height:10.6px;color:#222;">Total Seguro</div>
<div class="t" style="left:985.5px;top:654.03px;font-size:10.6px;line-height:10.6px;color:#222;">Outras Desepesas</div>
<div class="t" style="left:985.5px;top:673.83px;font-size:10.6px;line-height:10.6px;color:#222;">Total Tributos</div>
<div style="left:572px;top:658px;width:220px;height:23px;border-top:1px solid #a0a0a0;border-left:1px solid #a0a0a0;border-bottom:1px solid #fff;border-right:1px solid #fff"></div>
<div class="t" style="left:573.5px;top:663.83px;font-size:13.2px;line-height:13.2px;font-weight:bold;color:#1a1af5;">Total Nota</div>
<div style="left:320px;top:690px;width:892px;height:1px;background:#a8a8a8"></div>
<div style="left:324px;top:696px;width:92px;height:23px;background:#e1e1e1;border:1px solid #b6b6b6"></div>
<div class="t" style="left:351.6px;top:702.63px;font-size:10.6px;line-height:10.6px;color:#222;">Enviar NF-e</div>
<div style="left:418.6px;top:696px;width:71.79999999999995px;height:23px;background:#cccccc;border:1px solid #c4c4c4"></div>
<div class="t" style="left:447px;top:702.63px;font-size:10.6px;line-height:10.6px;color:#a6a6a6;text-shadow:1px 1px 0 #f4f4f4">DANFE</div>
<div style="left:493px;top:696px;width:86.60000000000002px;height:23px;background:#cccccc;border:1px solid #c4c4c4"></div>
<div class="t" style="left:525px;top:702.63px;font-size:10.6px;line-height:10.6px;color:#a6a6a6;text-shadow:1px 1px 0 #f4f4f4">Histórico</div>
<div style="left:582px;top:696px;width:95px;height:23px;background:#cccccc;border:1px solid #c4c4c4"></div>
<div class="t" style="left:605px;top:702.63px;font-size:10.6px;line-height:10.6px;color:#a6a6a6;text-shadow:1px 1px 0 #f4f4f4">Cancelar NF-e</div>
<div style="left:679.4px;top:696px;width:103.70000000000005px;height:23px;background:#cccccc;border:1px solid #c4c4c4"></div>
<div class="t" style="left:704px;top:702.63px;font-size:10.6px;line-height:10.6px;color:#a6a6a6;text-shadow:1px 1px 0 #f4f4f4">Carta Correção</div>
<div style="left:1022px;top:697px;width:89px;height:23px;background:#e1e1e1;border:1px solid #b6b6b6"></div>
<div style="left:1115px;top:697px;width:93px;height:23px;background:#e1e1e1;border:1px solid #b6b6b6"></div>
<div class="t" style="left:1046.6px;top:702.77px;font-size:10.9px;line-height:10.9px;color:#222;">Salvar [F11]</div>
<div class="t" style="left:1138px;top:702.86px;font-size:10.8px;line-height:10.8px;color:#222;">Cancelar [F7]</div>
<svg style="position:absolute;left:331px;top:700px" width="18" height="17" viewBox="0 0 18 17"><defs><linearGradient id="eg" x1="1" y1="0" x2="0" y2="1"><stop offset="0" stop-color="#c4ec38"/><stop offset="1" stop-color="#2e9410"/></linearGradient><linearGradient id="ebl" x1="1" y1="0" x2="0" y2="1"><stop offset="0" stop-color="#1a5ed0"/><stop offset="1" stop-color="#38d8f4"/></linearGradient></defs><path d="M3.2 1.7 H13.7 V4.1 H6 V7.1 H7.2 L4.2 11.6 L1.2 7.1 H3.2z" fill="url(#eg)"/><path d="M13.6 4.6 L16.8 9 H14.9 V14.4 H4.2 V11.9 H12.2 V9 H10.4z" fill="url(#ebl)"/></svg>
<svg style="position:absolute;left:428px;top:699px" width="16" height="19" viewBox="0 0 16 19"><path d="M2 1.5 h8 l3.5 3.5 v12 h-11.5z" fill="#f2f2f2" stroke="#6a6a6a" stroke-width="1"/><path d="M4.5 9h6.5M4.5 11.5h6.5M4.5 14h6.5" stroke="#6a6a6a" stroke-width="1"/></svg>
<svg style="position:absolute;left:505px;top:699px" width="18" height="18" viewBox="0 0 18 18"><circle cx="10.5" cy="9" r="6.5" fill="#d8d8d8" stroke="#b0b0b0" stroke-width="1"/><path d="M10.5 5.5v3.5h3" stroke="#9a9a9a" stroke-width="1.2" fill="none"/><path d="M10 1.5 q-6 0-7 6 l-2 -1 2.5 4 3-3.5 -2 0.3 q1-4 5.5-4z" fill="#8ccc50"/></svg>
<svg style="position:absolute;left:586px;top:699px" width="16" height="19" viewBox="0 0 16 19"><path d="M2 1.5 h8 l3.5 3.5 v12 h-11.5z" fill="#f2f2f2" stroke="#6a6a6a" stroke-width="1"/><path d="M4.5 9h5M4.5 11.5h5M4.5 14h5" stroke="#6a6a6a" stroke-width="1"/><path d="M7 9.5l7 7M14 9.5l-7 7" stroke="#e03030" stroke-width="1.6"/></svg>
<svg style="position:absolute;left:683px;top:699px" width="18" height="19" viewBox="0 0 18 19"><path d="M2 1.5 h8 l3.5 3.5 v12 h-11.5z" fill="#f0f0f0" stroke="#8a8a8a" stroke-width="1"/><path d="M4 8.5h6M4 11h6M4 13.5h4" stroke="#8a8a8a" stroke-width="1"/><path d="M10 16l1-3 5-5 1.5 1.5-5 5z" fill="#f0f0f0" stroke="#8a8a8a" stroke-width="0.9"/></svg>
<svg style="position:absolute;left:1028px;top:701px" width="15" height="16" viewBox="0 0 15 16"><defs><linearGradient id="fl" x1="0" y1="0" x2="1" y2="1"><stop offset="0" stop-color="#7fb0d8"/><stop offset="1" stop-color="#1f5a88"/></linearGradient></defs><path d="M1.2 1.5 q0-0.8 0.8-0.8 h10.8 q1.4 0 1.4 1.4 v11.8 q0 1.2-1.2 1.2 h-11 q-0.8 0-0.8-0.8z" fill="url(#fl)"/><rect x="4" y="1" width="6.5" height="5.5" fill="#eef4f8"/><rect x="7.8" y="2" width="1.6" height="3.2" fill="#2f6a98"/><rect x="3.5" y="8.8" width="8" height="6" fill="#e6eef4"/></svg>
<svg style="position:absolute;left:1118px;top:700px" width="17" height="17" viewBox="0 0 17 17"><defs><radialGradient id="ro" cx="0.4" cy="0.35" r="0.7"><stop offset="0" stop-color="#ff8a7a"/><stop offset="1" stop-color="#e0362a"/></radialGradient></defs><path d="M5 0.8 h7 l4.2 4.2 v7 l-4.2 4.2 h-7 l-4.2-4.2 v-7z" fill="url(#ro)" stroke="#c83020" stroke-width="0.6"/><path d="M5.5 5.5l6 6M11.5 5.5l-6 6" stroke="#fff" stroke-width="2.2"/></svg>
</body></html>
